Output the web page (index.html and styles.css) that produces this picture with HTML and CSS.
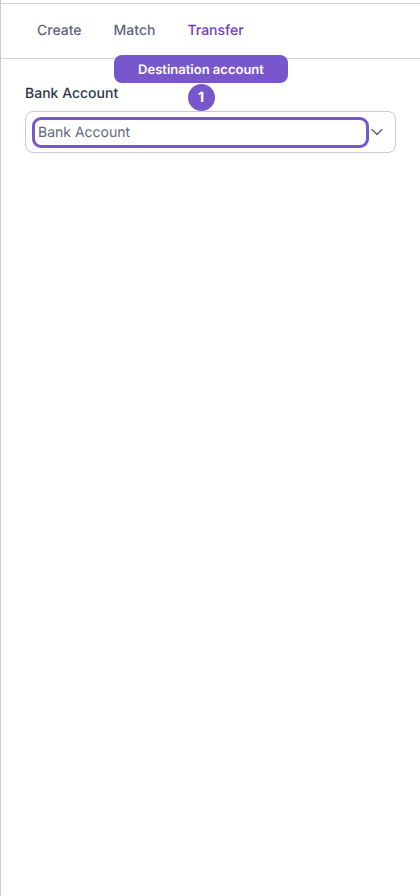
FILE: index.html
```html
<!DOCTYPE html>
<html lang="en">
<head>
<meta charset="utf-8">
<title>Transfer</title>
<link rel="stylesheet" href="styles.css">
</head>
<body>
<div class="panel">
  <nav class="tabs">
    <a class="tab">Create</a>
    <a class="tab">Match</a>
    <a class="tab active">Transfer</a>
  </nav>
  <div class="form">
    <label class="label">Bank Account</label>
    <div class="select">
      <span class="value">Bank Account</span>
      <svg class="chevron" width="14" height="8" viewBox="0 0 14 8" fill="none"><path d="M2 1.4 7 6.4l5-5" stroke="#5a637c" stroke-width="1.4" stroke-linecap="round" stroke-linejoin="round"/></svg>
    </div>
  </div>
  <div class="tour-tip">Destination account</div>
  <div class="tour-badge">1</div>
</div>
</body>
</html>
```
FILE: styles.css
```css
* { box-sizing: border-box; }
html, body { margin: 0; padding: 0; background: #fff; }
body { font-family: Inter, "Liberation Sans", sans-serif; overflow: hidden; text-rendering: geometricPrecision; }
.panel {
  position: relative;
  width: 420px;
  height: 896px;
  padding-top: 3px;
  border-left: 1px solid #cbc8de;
}
.tabs {
  display: flex;
  gap: 32px;
  height: 56px;
  padding-left: 37px;
  padding-bottom: 1px;
  align-items: center;
  border-top: 1px solid #d3d1e0;
  border-bottom: 1px solid #d3d1e0;
  margin-left: -1px;
}
.tab { font-size: 14px; font-weight: 500; line-height: 20px; color: #5f6480; }
.tab.active { color: #6b3fc4; }
.form { padding: 25px 24px 0; }
.label {
  display: block;
  font-size: 14px;
  font-weight: 500;
  line-height: 20px;
  color: #2d3748;
  margin-bottom: 7px;
}
.select {
  display: flex;
  align-items: center;
  height: 42px;
  padding-left: 6px;
  border: 1px solid #cbc8dc;
  border-radius: 8px;
  width: 371px;
}
.value {
  flex: none;
  width: 337px;
  height: 31px;
  padding-left: 3px;
  border: 3px solid #7856cc;
  border-radius: 9px;
  font-size: 14px;
  line-height: 25px;
  color: #5f6880;
}
.chevron { margin-left: 1px; }
.tour-tip {
  position: absolute;
  left: 113px;
  top: 55px;
  width: 174px;
  height: 28px;
  padding-top: 1px;
  border-radius: 8px;
  background: #7856cc;
  color: #fff;
  font-size: 13px;
  font-weight: 600;
  line-height: 28px;
  text-align: center;
}
.tour-badge {
  position: absolute;
  left: 187px;
  top: 84px;
  width: 27px;
  height: 27px;
  padding-right: 1px;
  border-radius: 50%;
  background: #7856cc;
  color: #fff;
  font-size: 14px;
  font-weight: 700;
  line-height: 27px;
  text-align: center;
}
```
